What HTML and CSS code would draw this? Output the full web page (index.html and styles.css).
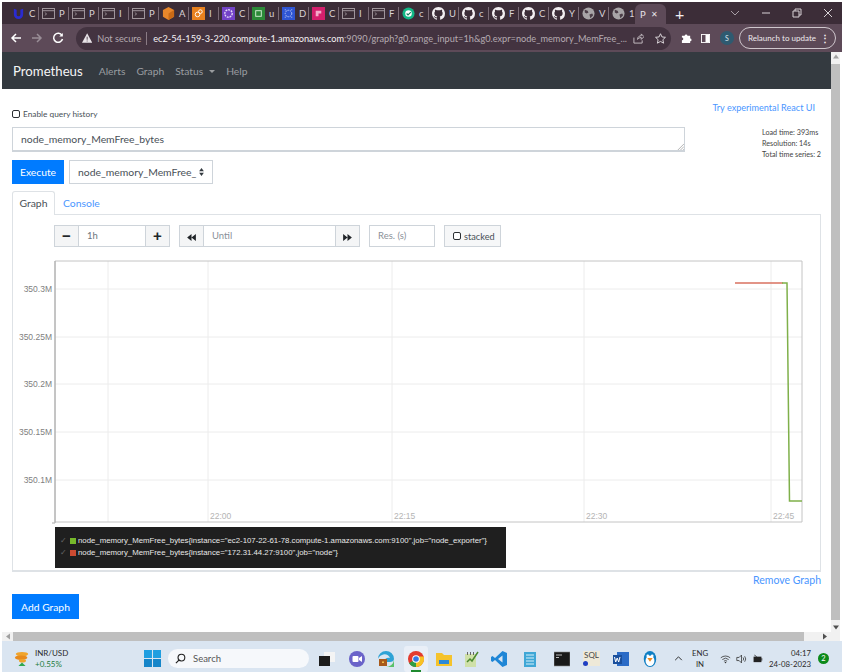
FILE: index.html
```html
<!DOCTYPE html>
<html lang="en">
<head>
    <meta charset="UTF-8">
    <meta name="viewport" content="width=device-width, initial-scale=1.0">
    <title>Prometheus Time Series Collection and Processing Server</title>
    <link rel="stylesheet" href="styles.css">
</head>
<body>
    <svg class="defs" width="0" height="0">
        <symbol id="gh" viewBox="0 0 16 16"><path fill="#f2eef1" d="M8 0C3.58 0 0 3.58 0 8c0 3.54 2.29 6.53 5.47 7.59.4.07.55-.17.55-.38 0-.19-.01-.82-.01-1.49-2.01.37-2.53-.49-2.69-.94-.09-.23-.48-.94-.82-1.13-.28-.15-.68-.52-.01-.53.63-.01 1.08.58 1.23.82.72 1.21 1.87.87 2.33.66.07-.52.28-.87.51-1.07-1.78-.2-3.64-.89-3.64-3.95 0-.87.31-1.59.82-2.15-.08-.2-.36-1.02.08-2.12 0 0 .67-.21 2.2.82.64-.18 1.32-.27 2-.27.68 0 1.36.09 2 .27 1.53-1.04 2.2-.82 2.2-.82.44 1.1.16 1.92.08 2.12.51.56.82 1.27.82 2.15 0 3.07-1.87 3.75-3.65 3.95.29.25.54.73.54 1.48 0 1.07-.01 1.93-.01 2.2 0 .21.15.46.55.38A8.013 8.013 0 0016 8c0-4.42-3.58-8-8-8z"/></symbol>
        <symbol id="term" viewBox="0 0 14 12"><rect x=".6" y=".6" width="12.8" height="10.8" fill="#3a2c36" stroke="#a9a0a6"/><path d="M1 3h12" stroke="#a9a0a6"/><path d="M3 5l2 1.5L3 8" fill="none" stroke="#a9a0a6" stroke-width=".8"/></symbol>
        <symbol id="globe" viewBox="0 0 14 14"><circle cx="7" cy="7" r="6.5" fill="#a8a4a7"/><path d="M3 3l3 1 1 2-2 1-2-1zM8 8l3-1 1 2-3 3z" fill="#4b3d47"/></symbol>
    </svg>

    <div class="window">
        <div class="tabstrip">
            <div class="tab"><svg class="fav" viewBox="0 0 14 14"><path d="M2 2v6a5 5 0 0010 0V2l-3 1v5a2 2 0 01-4 0V3z" fill="#2a2bd0"/></svg><span>C</span></div>
            <div class="tab"><svg class="fav"><use href="#term"/></svg><span>P</span></div>
            <div class="tab"><svg class="fav"><use href="#term"/></svg><span>P</span></div>
            <div class="tab"><svg class="fav"><use href="#term"/></svg><span>I</span></div>
            <div class="tab"><svg class="fav"><use href="#term"/></svg><span>P</span></div>
            <div class="tab"><svg class="fav" viewBox="0 0 14 14"><path d="M7 0l6 3.2v7.2L7 14l-6-3.6V3.2z" fill="#e8872b"/><path d="M7 7l6-3.8v7.2L7 14z" fill="#c96a16"/></svg><span>A</span></div>
            <div class="tab"><svg class="fav" viewBox="0 0 14 14"><rect width="14" height="14" fill="#e8811f"/><circle cx="6" cy="8" r="2.5" fill="none" stroke="#fff"/><circle cx="9" cy="5" r="2" fill="none" stroke="#fff"/></svg><span>I</span></div>
            <div class="tab"><svg class="fav" viewBox="0 0 14 14"><rect width="14" height="14" fill="#7343c8"/><circle cx="7" cy="7" r="4" fill="none" stroke="#e6dcf8" stroke-width="1.5" stroke-dasharray="2 1"/></svg><span>C</span></div>
            <div class="tab"><svg class="fav" viewBox="0 0 14 14"><rect width="14" height="14" fill="#2c8a38"/><rect x="4" y="4" width="6" height="6" fill="none" stroke="#d8efd9"/></svg><span>u</span></div>
            <div class="tab"><svg class="fav" viewBox="0 0 14 14"><rect width="14" height="14" fill="#2f55d4"/><circle cx="7" cy="7" r="3.5" fill="none" stroke="#c9d5fb" stroke-dasharray="1.5 1"/><path d="M3 3h1M10 3h1M3 11h1M10 11h1" stroke="#c9d5fb"/></svg><span>D</span></div>
            <div class="tab"><svg class="fav" viewBox="0 0 14 14"><rect width="14" height="14" fill="#d41f6c"/><path d="M4 4h6v3H7v3H4z" fill="#f5a9c9"/></svg><span>C</span></div>
            <div class="tab"><svg class="fav"><use href="#term"/></svg><span>I</span></div>
            <div class="tab"><svg class="fav"><use href="#term"/></svg><span>F</span></div>
            <div class="tab"><svg class="fav" viewBox="0 0 14 14"><circle cx="7" cy="7" r="6.5" fill="#12b886"/><circle cx="7" cy="7" r="3.5" fill="#fff"/><path d="M5 7l1.5 1.5L9.5 5.500" fill="none" stroke="#12805c" stroke-width="1.200"/></svg><span>c</span></div>
            <div class="tab"><svg class="fav"><use href="#gh"/></svg><span>U</span></div>
            <div class="tab"><svg class="fav"><use href="#gh"/></svg><span>c</span></div>
            <div class="tab"><svg class="fav"><use href="#gh"/></svg><span>F</span></div>
            <div class="tab"><svg class="fav"><use href="#gh"/></svg><span>C</span></div>
            <div class="tab"><svg class="fav"><use href="#gh"/></svg><span>Y</span></div>
            <div class="tab"><svg class="fav"><use href="#globe"/></svg><span>V</span></div>
            <div class="tab"><svg class="fav"><use href="#globe"/></svg><span>1</span></div>
            <div class="tab-active"><span>P</span><span class="tab-x">✕</span></div>
            <span class="new-tab">+</span>
            <div class="win-controls">
                <svg viewBox="0 0 10 10"><path d="M1 3l4 4 4-4" fill="none" stroke="#a79ea5"/></svg>
                <svg viewBox="0 0 10 10"><path d="M1 5h8" stroke="#d8d2d6"/></svg>
                <svg viewBox="0 0 10 10"><path d="M3 3V1h6v6H7M1 3h6v6H1z" fill="none" stroke="#d8d2d6"/></svg>
                <svg viewBox="0 0 10 10"><path d="M1 1l8 8M9 1l-8 8" stroke="#d8d2d6"/></svg>
            </div>
        </div>

        <div class="toolbar">
            <svg class="tb-btn" viewBox="0 0 12 12"><path d="M11 6H2M6 2L2 6l4 4" fill="none" stroke="#fff" stroke-width="1.500"/></svg>
            <svg class="tb-btn" viewBox="0 0 12 12"><path d="M1 6h9M6 2l4 4-4 4" fill="none" stroke="#9a8e97" stroke-width="1.500"/></svg>
            <svg class="tb-btn" viewBox="0 0 12 12"><path d="M10 3.500A4.500 4.500 0 1010.500 7" fill="none" stroke="#fff" stroke-width="1.500"/><path d="M10.800 1v3.500H7.300z" fill="#fff"/></svg>
            <div class="omnibox">
                <svg class="warn" viewBox="0 0 12 11"><path d="M6 0l6 11H0z" fill="#e8e3e7"/><path d="M6 4v3.500M6 8.500v1" stroke="#433340"/></svg>
                <span class="not-secure">Not secure</span>
                <span class="omni-sep"></span>
                <span class="url"><b>ec2-54-159-3-220.compute-1.amazonaws.com</b>:9090/graph?g0.range_input=1h&amp;g0.expr=node_memory_MemFree_...</span>
                <svg class="omni-icon" viewBox="0 0 12 12"><path d="M1 5v6h9V8M5 7c0-3 2-4 4-4V1l3 3-3 3V5C7 5 6 5.500 5 7z" fill="none" stroke="#c9c2c7"/></svg>
                <svg class="omni-icon" viewBox="0 0 12 12"><path d="M6 .8l1.600 3.500 3.800.4-2.800 2.600.8 3.800L6 9.200l-3.400 1.900.8-3.800L.6 4.700l3.800-.4z" fill="none" stroke="#e4dfe3"/></svg>
            </div>
            <svg class="puzzle" viewBox="0 0 12 12"><path d="M1 3h3a1.500 1.500 0 013 0h3v3a1.500 1.500 0 010 3v2H1V8a1.500 1.500 0 000-3z" fill="#fff"/></svg>
            <svg class="panel" viewBox="0 0 10 10"><rect x=".5" y=".5" width="9" height="9" fill="none" stroke="#fff"/><rect x="5" y="1" width="4" height="8" fill="#fff"/></svg>
            <span class="avatar">S</span>
            <div class="relaunch">Relaunch to update<span class="kebab">⋮</span></div>
        </div>

        <div class="main">
            <div class="page">
                <nav class="navbar">
                    <span class="brand">Prometheus</span>
                    <a class="nav-link">Alerts</a>
                    <a class="nav-link">Graph</a>
                    <a class="nav-link">Status<i class="caret"></i></a>
                    <a class="nav-link">Help</a>
                </nav>

                <div class="content">
                    <div class="top-row">
                        <label class="history"><span class="check"></span>Enable query history</label>
                        <a class="react-link">Try experimental React UI</a>
                    </div>

                    <div class="query-row">
                        <div class="query-left">
                            <div class="expr">node_memory_MemFree_bytes
                                <svg class="grip" viewBox="0 0 8 8"><path d="M1 8l7-7M4 8l4-4M7 8l1-1" stroke="#888" stroke-width=".7"/></svg>
                            </div>
                            <div class="exec-row">
                                <button class="btn-primary">Execute</button>
                                <div class="metric-select"><span>node_memory_MemFree_</span><svg viewBox="0 0 6 10"><path d="M3 0l3 4H0zM3 10L0 6h6z" fill="#343a40"/></svg></div>
                            </div>
                        </div>
                        <div class="stats">
                            <div>Load time: 393ms</div>
                            <div>Resolution: 14s</div>
                            <div>Total time series: 2</div>
                        </div>
                    </div>

                    <div class="tabs">
                        <span class="pane-tab">Graph</span>
                        <a class="pane-link">Console</a>
                    </div>

                    <div class="pane">
                        <div class="controls">
                            <div class="group range">
                                <button class="ctl">−</button>
                                <div class="field field-range">1h</div>
                                <button class="ctl">+</button>
                            </div>
                            <div class="group until">
                                <button class="ctl"><svg viewBox="0 0 10 8"><path d="M5 0v8L0 4zM10 0v8L5 4z" fill="#212529"/></svg></button>
                                <div class="field field-until">Until</div>
                                <button class="ctl"><svg viewBox="0 0 10 8"><path d="M0 0v8l5-4zM5 0v8l5-4z" fill="#212529"/></svg></button>
                            </div>
                            <div class="field field-res">Res. (s)</div>
                            <div class="stacked"><span class="check"></span>stacked</div>
                        </div>

                        <svg class="chart" viewBox="13 250 790 275" width="790" height="275">
                            <g class="grid">
                                <path d="M55 289H802M55 337H802M55 384H802M55 432H802M55 480H802"/>
                                <path d="M108 261V522M208 261V522M392 261V522M584 261V522M771 261V522"/>
                            </g>
                            <path class="frame" d="M55 261H802V522H55z"/>
                            <path class="frame-left" d="M55 261V523"/>
                            <path class="tick" d="M52 523H55"/>
                            <g class="y-labels">
                                <text x="52" y="292">350.3M</text>
                                <text x="52" y="340">350.25M</text>
                                <text x="52" y="387">350.2M</text>
                                <text x="52" y="435">350.15M</text>
                                <text x="52" y="483">350.1M</text>
                            </g>
                            <g class="x-labels">
                                <text x="210" y="519">22:00</text>
                                <text x="394" y="519">22:15</text>
                                <text x="586" y="519">22:30</text>
                                <text x="773" y="519">22:45</text>
                            </g>
                            <path class="line-red" d="M735 283H783"/>
                            <path class="line-green" d="M782 283H787L789.500 501H802"/>
                        </svg>

                        <div class="legend">
                            <div class="legend-row"><i class="tick-mark">✓</i><i class="swatch swatch-green"></i>node_memory_MemFree_bytes{instance="ec2-107-22-61-78.compute-1.amazonaws.com:9100",job="node_exporter"}</div>
                            <div class="legend-row"><i class="tick-mark">✓</i><i class="swatch swatch-red"></i>node_memory_MemFree_bytes{instance="172.31.44.27:9100",job="node"}</div>
                        </div>
                    </div>

                    <div class="remove-row"><a class="pane-link">Remove Graph</a></div>
                    <button class="btn-primary btn-add">Add Graph</button>
                </div>
            </div>

            <div class="vscroll">
                <svg viewBox="0 0 8 8"><path d="M4 2l3 4H1z" fill="#a0a0a0"/></svg>
                <div class="vthumb"></div>
                <svg viewBox="0 0 8 8"><path d="M4 6L1 2h6z" fill="#505050"/></svg>
            </div>
            <div class="hscroll">
                <svg viewBox="0 0 8 8"><path d="M2 4l4-3v6z" fill="#a0a0a0"/></svg>
                <div class="hthumb"></div>
                <svg viewBox="0 0 8 8"><path d="M6 4L2 1v6z" fill="#505050"/></svg>
            </div>
            <div class="corner"></div>
        </div>

        <div class="taskbar">
            <div class="widget">
                <svg class="widget-icon" viewBox="0 0 18 18"><ellipse cx="9" cy="3.500" rx="7" ry="2.500" fill="#f0a42c"/><ellipse cx="8" cy="7.500" rx="7" ry="2.500" fill="#e88a1c"/><ellipse cx="9.500" cy="11" rx="4" ry="2" fill="#f0a42c"/><path d="M9 13l4 4H5z" fill="#2fa84f"/></svg>
                <div>
                    <div class="widget-name">INR/USD</div>
                    <div class="widget-change">+0.55%</div>
                </div>
            </div>

            <svg class="start" viewBox="0 0 16 16"><path fill="#1f9ee0" d="M0 0h7.500v7.500H0zM8.500 0H16v7.500H8.500z"/><path fill="#1585c9" d="M0 8.500h7.500V16H0zM8.500 8.500H16V16H8.500z"/></svg>
            <div class="search">
                <svg viewBox="0 0 12 12"><circle cx="7" cy="5" r="3.700" fill="none" stroke="#222" stroke-width="1.200"/><path d="M4.300 7.700L1 11" stroke="#222" stroke-width="1.300"/></svg>
                <span>Search</span>
            </div>

            <div class="task-icons">
                <svg viewBox="0 0 16 16"><rect x="5" y="1" width="11" height="10" fill="#f4f4f4"/><rect x="0" y="5" width="11" height="10" fill="#1c1c1c"/></svg>
                <svg viewBox="0 0 16 16"><circle cx="8" cy="8" r="8" fill="#6a63c9"/><rect x="3.500" y="5" width="6" height="6" rx="1" fill="#fff"/><path d="M10 7l3-2v6l-3-2z" fill="#fff"/></svg>
                <svg viewBox="0 0 16 16"><path d="M8 0a8 8 0 018 8c0 2-2 3-4 3H6c0-3 3-5 6-4-1-3-5-5-8-3-3 1-4 4-4 4a8 8 0 018-8z" fill="#2ea3d6"/><path d="M16 9a8 8 0 01-8 7h8z" fill="#59c16a"/><rect x="1" y="8" width="8" height="7" fill="#a85a1c"/><rect x="4" y="10.500" width="2" height="1.500" fill="#f2c14e"/></svg>
                <div class="task-active">
                    <svg viewBox="0 0 16 16"><circle cx="8" cy="8" r="8" fill="#e33b2e"/><path d="M8 8L1 12.300A8 8 0 008 16l4-8z" fill="#2f9e44"/><path d="M8 16a8 8 0 007.600-10.500H8z" fill="#f7c325"/><circle cx="8" cy="8" r="3.800" fill="#fff"/><circle cx="8" cy="8" r="2.800" fill="#3278e6"/></svg>
                    <i class="running"></i>
                </div>
                <svg viewBox="0 0 16 16"><path d="M0 2h6l2 2h8v11H0z" fill="#f5c32c"/><rect x="3" y="9" width="10" height="4" fill="#2b89d8"/></svg>
                <svg viewBox="0 0 16 16"><path d="M2 3h11v13H2z" fill="#cfe0a8"/><path d="M4 1h1v3H4zM7 1h1v3H7zM10 1h1v3h-1z" fill="#666"/><path d="M4 11l3-3 2 2 6-9" fill="none" stroke="#4b8a2f" stroke-width="1.500"/></svg>
                <svg viewBox="0 0 16 16"><path d="M11.500 0L16 2v12l-4.500 2L4 9 1.500 11 0 10V6l1.500-1L4 7zM11.500 4.500L7 8l4.500 3.500z" fill="#1f86d6"/></svg>
                <svg viewBox="0 0 16 16"><rect x="2" y="1" width="12" height="15" fill="#3fa7d6"/><path d="M4 4h8M4 7h8M4 10h8M4 13h8" stroke="#d7f0fa"/></svg>
                <svg viewBox="0 0 16 16"><rect y="1" width="16" height="14" fill="#191919" stroke="#8a8a8a" stroke-width=".6"/><path d="M2 4h6M2 6.500h3" stroke="#bbb"/></svg>
                <div class="sql-icon"><span>SQL</span><i></i></div>
                <svg viewBox="0 0 16 16"><rect x="4" y="1" width="12" height="14" fill="#2b6bc6"/><rect y="4" width="9" height="9" fill="#1a4f9c"/><path d="M1.500 6l1.200 5 1.500-4 1.500 4L7 6" fill="none" stroke="#fff"/></svg>
                <svg viewBox="0 0 16 18"><ellipse cx="8" cy="9" rx="7" ry="9" fill="#0f7fc4"/><ellipse cx="8" cy="11" rx="5" ry="6" fill="#fff"/><circle cx="5.500" cy="5.500" r="1.500" fill="#fff"/><circle cx="10.500" cy="5.500" r="1.500" fill="#fff"/><path d="M5 8h6l-3 4z" fill="#f08a1c"/></svg>
            </div>

            <div class="tray">
                <svg class="tray-chevron" viewBox="0 0 10 6"><path d="M1 5l4-4 4 4" fill="none" stroke="#222" stroke-width="1.100"/></svg>
                <div class="lang"><div>ENG</div><div>IN</div></div>
                <svg class="tray-icon" viewBox="0 0 14 12"><path d="M1 4.500a9 9 0 0112 0M3 6.700a6 6 0 018 0M5 8.800a3 3 0 014 0" fill="none" stroke="#333"/><circle cx="7" cy="10.500" r="1" fill="#333"/></svg>
                <svg class="tray-icon" viewBox="0 0 14 12"><path d="M1 4h3l3-3v10L4 8H1z" fill="none" stroke="#333"/><path d="M9 4a3 3 0 010 4M11 2.500a5.500 5.500 0 010 7" fill="none" stroke="#333"/></svg>
                <svg class="tray-icon" viewBox="0 0 14 12"><rect x="2" y="3" width="10" height="7" fill="#222"/><path d="M12.500 5v3M3 1l3 2" stroke="#222"/></svg>
                <div class="clock"><div>04:17</div><div>24-08-2023</div></div>
                <span class="notif">2</span>
            </div>
        </div>
    </div>
</body>
</html>
```

FILE: styles.css
```css
* {
    box-sizing: border-box;
}
html, body {
    margin: 0;
    height: 100%;
    overflow: hidden;
    background: #fff;
}
body {
    font-family: Lato, "Open Sans", Arial, sans-serif;
    color: #495057;
}
.defs {
    position: absolute;
}
a {
    color: #4a96ff;
}
.window {
    margin: 2px 0 0 2px;
    height: 670px;
    width: 840px;
    display: flex;
    flex-direction: column;
}

/* browser chrome */
.tabstrip {
    height: 22px;
    background: #3c2d38;
    display: flex;
    align-items: center;
    padding-left: 7px;
    color: #d9d3d7;
    font-size: 9.500px;
}
.tab {
    width: 30px;
    height: 13px;
    padding-left: 3px;
    display: flex;
    align-items: center;
    gap: 4px;
    border-right: 1px solid #7a6a75;
    line-height: 13px;
}
.fav {
    width: 13px;
    height: 13px;
    flex: none;
}
.tab-active {
    width: 31px;
    height: 20px;
    margin: 2px 0 0 -4px;
    background: #5d4a58;
    border-radius: 6px 6px 0 0;
    display: flex;
    align-items: center;
    padding-left: 5px;
    color: #e8e3e7;
    position: relative;
}
.tab-x {
    margin-left: 5px;
    font-size: 8px;
}
.new-tab {
    margin-left: 9px;
    font-size: 16px;
    color: #f1edf0;
}
.win-controls {
    display: flex;
    margin-left: 46px;
    gap: 21px;
}
.win-controls svg {
    width: 10px;
    height: 10px;
}
.toolbar {
    height: 28px;
    background: #5d4a58;
    display: flex;
    align-items: center;
    padding-left: 8px;
}
.tb-btn {
    width: 12px;
    height: 12px;
    margin-right: 9px;
}
.omnibox {
    width: 595px;
    height: 23px;
    margin-left: 3px;
    background: #433340;
    border-radius: 12px;
    display: flex;
    align-items: center;
    padding-left: 3px;
    font-size: 9.200px;
    white-space: nowrap;
}
.warn {
    width: 11px;
    height: 10px;
    margin: 0 5px 0 3px;
}
.not-secure {
    color: #b5abb2;
    width: 44px;
}
.omni-sep {
    width: 1px;
    height: 13px;
    background: #8a7b85;
    margin: 0 6px 0 5px;
}
.url {
    color: #b5abb2;
    width: 474px;
}
.url b {
    font-weight: 400;
    color: #f5f2f4;
}
.omni-icon {
    width: 11px;
    height: 11px;
    margin-left: 6px;
    margin-right: 5px;
    flex: none;
}
.puzzle {
    width: 11px;
    height: 11px;
    margin-left: 10px;
}
.panel {
    width: 9px;
    height: 9px;
    margin-left: 9px;
}
.avatar {
    width: 14px;
    height: 14px;
    border-radius: 50%;
    background: #2f5a70;
    color: #d8e6ee;
    font-size: 7px;
    line-height: 14px;
    text-align: center;
    margin-left: 10px;
}
.relaunch {
    width: 97px;
    height: 22px;
    margin-left: 5px;
    border: 1px solid #cfc7cd;
    border-radius: 11px;
    color: #efeaee;
    font-size: 8px;
    line-height: 20px;
    padding-left: 8px;
    white-space: nowrap;
    display: flex;
    justify-content: space-between;
    padding-right: 5px;
}
.kebab {
    font-size: 10px;
    font-weight: 700;
}

/* page + scrollbars */
.main {
    flex: 1;
    min-height: 0;
    display: grid;
    grid-template-columns: 829px 9px;
    grid-template-rows: 580px 9px;
}
.page {
    overflow: hidden;
}
.navbar {
    height: 37px;
    background: #343a40;
    display: flex;
    align-items: center;
    padding-left: 11px;
}
.brand {
    color: #f4f5f5;
    font-size: 13.200px;
    margin-right: 16px;
}
.nav-link {
    color: #9a9da0;
    font-size: 10.300px;
    margin-right: 11px;
}
.caret {
    display: inline-block;
    margin-left: 6px;
    vertical-align: 2px;
    border: 3px solid transparent;
    border-top-color: #9a9da0;
    border-bottom: 0;
}
.content {
    padding: 0 10px;
}
.top-row {
    height: 38px;
    display: flex;
    justify-content: space-between;
    padding-right: 6px;
}
.history {
    font-size: 8.300px;
    color: #495057;
    margin-top: 19px;
    display: flex;
    align-items: center;
    height: 12px;
}
.check {
    width: 8px;
    height: 8px;
    border: 1.500px solid #2b2f33;
    border-radius: 2px;
    background: #fff;
    margin-right: 3px;
    flex: none;
}
.react-link {
    font-size: 9.100px;
    margin-top: 13px;
}
.query-row {
    display: flex;
    justify-content: space-between;
}
.query-left {
    width: 673px;
}
.expr {
    position: relative;
    height: 25px;
    border: 1px solid #ced4da;
    border-bottom-width: 2px;
    padding-left: 8px;
    font-size: 10.400px;
    line-height: 23px;
    color: #495057;
}
.grip {
    position: absolute;
    right: 0;
    bottom: 0;
    width: 7px;
    height: 7px;
}
.exec-row {
    display: flex;
    gap: 5px;
    margin-top: 8px;
}
.btn-primary {
    height: 24px;
    border: 0;
    background: #007bff;
    color: #fff;
    font-family: inherit;
    font-size: 10.300px;
    width: 52px;
    padding: 0;
}
.metric-select {
    width: 144px;
    height: 24px;
    border: 1px solid #ced4da;
    display: flex;
    align-items: center;
    justify-content: space-between;
    padding: 0 8px;
    font-size: 10.400px;
}
.metric-select span {
    white-space: nowrap;
}
.metric-select svg {
    width: 5px;
    height: 8px;
}
.stats {
    width: 59px;
    font-size: 7.200px;
    line-height: 11px;
    color: #444;
    white-space: nowrap;
}
.tabs {
    height: 23px;
    margin-top: 7px;
    display: flex;
    align-items: center;
    font-size: 10.400px;
}
.pane-tab {
    width: 43px;
    height: 24px;
    line-height: 22px;
    margin-bottom: -1px;
    text-align: center;
    background: #fff;
    border: 1px solid #dee2e6;
    border-bottom: 0;
    border-radius: 3px 3px 0 0;
    position: relative;
}
.pane-link {
    color: #4a96ff;
    margin-left: 8px;
}
.pane {
    height: 358px;
    border: 1px solid #dee2e6;
    border-bottom-width: 2px;
}
.controls {
    display: flex;
    height: 22px;
    margin: 10px 0 0 41px;
    gap: 9px;
    font-size: 9.500px;
}
.group {
    display: flex;
}
.ctl {
    width: 25px;
    height: 22px;
    border: 1px solid #ced4da;
    background: #f4f5f6;
    color: #212529;
    font-size: 15px;
    font-weight: 700;
    line-height: 18px;
    padding: 0;
    font-family: "Liberation Sans", Arial, sans-serif;
}
.ctl svg {
    width: 9px;
    height: 7px;
}
.field {
    height: 22px;
    border-top: 1px solid #ced4da;
    border-bottom: 1px solid #ced4da;
    padding-left: 8px;
    line-height: 19px;
    color: #8a9199;
}
.field-range {
    width: 66px;
    color: #6c757d;
}
.field-until {
    width: 131px;
}
.field-res {
    width: 66px;
    border: 1px solid #ced4da;
}
.stacked {
    width: 57px;
    height: 22px;
    border: 1px solid #ced4da;
    background: #f6f7f8;
    display: flex;
    align-items: center;
    padding-left: 8px;
    font-size: 9.200px;
}
.chart {
    display: block;
    margin-top: 3px;
}
.grid path {
    stroke: #ececec;
    stroke-width: 1;
    fill: none;
}
.frame {
    fill: none;
    stroke: #c4c4c4;
}
.frame-left, .tick {
    stroke: #a8a8a8;
    stroke-width: 1;
}
.y-labels text, .x-labels text {
    font-family: "Liberation Sans", Arial, sans-serif;
    font-size: 8.500px;
    fill: #808080;
}
.y-labels text {
    text-anchor: end;
}
.x-labels text {
    fill: #b4b4b4;
}
.line-red {
    fill: none;
    stroke: #d9705f;
    stroke-width: 1.500;
}
.line-green {
    fill: none;
    stroke: #7fb04a;
    stroke-width: 1.500;
}
.legend {
    width: 451px;
    height: 41px;
    margin: 2px 0 0 42px;
    background: #1f1f1f;
    color: #e8e8e8;
    font-family: "Liberation Sans", Arial, sans-serif;
    font-size: 7.800px;
    padding-top: 8px;
}
.legend-row {
    height: 12px;
    line-height: 12px;
    padding-left: 5px;
    white-space: nowrap;
    display: flex;
    align-items: center;
}
.tick-mark {
    color: #666;
    font-style: normal;
    width: 10px;
    font-size: 8px;
    flex: none;
}
.swatch {
    width: 6px;
    height: 6px;
    margin-right: 2px;
    flex: none;
}
.swatch-green {
    background: #76b82a;
}
.swatch-red {
    background: #cc4b32;
}
.remove-row {
    height: 16px;
    margin-bottom: 6px;
    display: flex;
    justify-content: flex-end;
    align-items: center;
    font-size: 10.500px;
}
.btn-add {
    width: 67px;
    height: 25px;
}
.vscroll {
    background: #f1f1f1;
    display: flex;
    flex-direction: column;
    justify-content: space-between;
    align-items: center;
}
.vscroll svg, .hscroll svg {
    width: 8px;
    height: 9px;
    flex: none;
}
.vthumb {
    flex: 1;
    width: 9px;
    background: #bfbfbf;
    margin: 3px 0;
}
.hscroll {
    grid-column: 1;
    background: #f1f1f1;
    display: flex;
    align-items: center;
    padding: 0 2px;
}
.hthumb {
    width: 795px;
    height: 9px;
    background: #bfbfbf;
    margin: 0 17px 0 1px;
}
.corner {
    background: #f1f1f1;
}

/* windows taskbar */
.taskbar {
    height: 31px;
    margin-right: -2px;
    padding-top: 4px;
    background: #dae5f1;
    display: flex;
    align-items: center;
    color: #2a2a2a;
}
.widget {
    width: 142px;
    display: flex;
    align-items: center;
    font-size: 8px;
    line-height: 11px;
    padding-left: 12px;
    gap: 5px;
}
.widget-icon {
    width: 16px;
    height: 18px;
}
.widget-change {
    color: #1c7c3c;
}
.start {
    width: 17px;
    height: 17px;
}
.search {
    width: 141px;
    height: 19px;
    margin-left: 7px;
    border-radius: 10px;
    background: #f6f8fb;
    display: flex;
    align-items: center;
    padding-left: 7px;
    gap: 7px;
    font-size: 9.500px;
    color: #555;
}
.search svg {
    width: 11px;
    height: 11px;
}
.task-icons {
    display: grid;
    grid-template-columns: 30px 29px 30px 30px 25px 29px 28px 33px 31px 29px 29px 29px;
    justify-items: center;
    align-items: center;
    margin-left: 3px;
}
.task-icons > svg, .task-active svg {
    width: 16px;
    height: 16px;
}
.task-active {
    width: 24px;
    height: 26px;
    background: #e9eff7;
    border-radius: 3px;
    display: flex;
    flex-direction: column;
    align-items: center;
    justify-content: center;
    position: relative;
}
.running {
    position: absolute;
    bottom: 0;
    width: 10px;
    height: 2px;
    background: #1f8a2f;
}
.sql-icon {
    font-size: 8px;
    line-height: 9px;
    position: relative;
    color: #444;
    background: #eee9d8;
    padding: 0 1px 6px;
}
.sql-icon i {
    position: absolute;
    left: 0;
    bottom: 0;
    width: 5px;
    height: 5px;
    border-radius: 50%;
    background: #1f3fc4;
}
.tray {
    display: flex;
    align-items: center;
    margin-left: 10px;
    font-size: 7.800px;
}
.tray-chevron {
    width: 9px;
    height: 5px;
}
.lang {
    text-align: center;
    margin-left: 6px;
    line-height: 11px;
    width: 22px;
}
.tray-icon {
    width: 11px;
    height: 10px;
    margin-left: 5px;
}
.lang + .tray-icon {
    margin-left: 9px;
}
.clock {
    margin-left: 6px;
    width: 42px;
    text-align: right;
    line-height: 11px;
    white-space: nowrap;
}
.notif {
    width: 11px;
    height: 11px;
    border-radius: 50%;
    background: #0c8a1a;
    color: #fff;
    font-size: 7.500px;
    line-height: 11px;
    text-align: center;
    margin-left: 7px;
}
```
